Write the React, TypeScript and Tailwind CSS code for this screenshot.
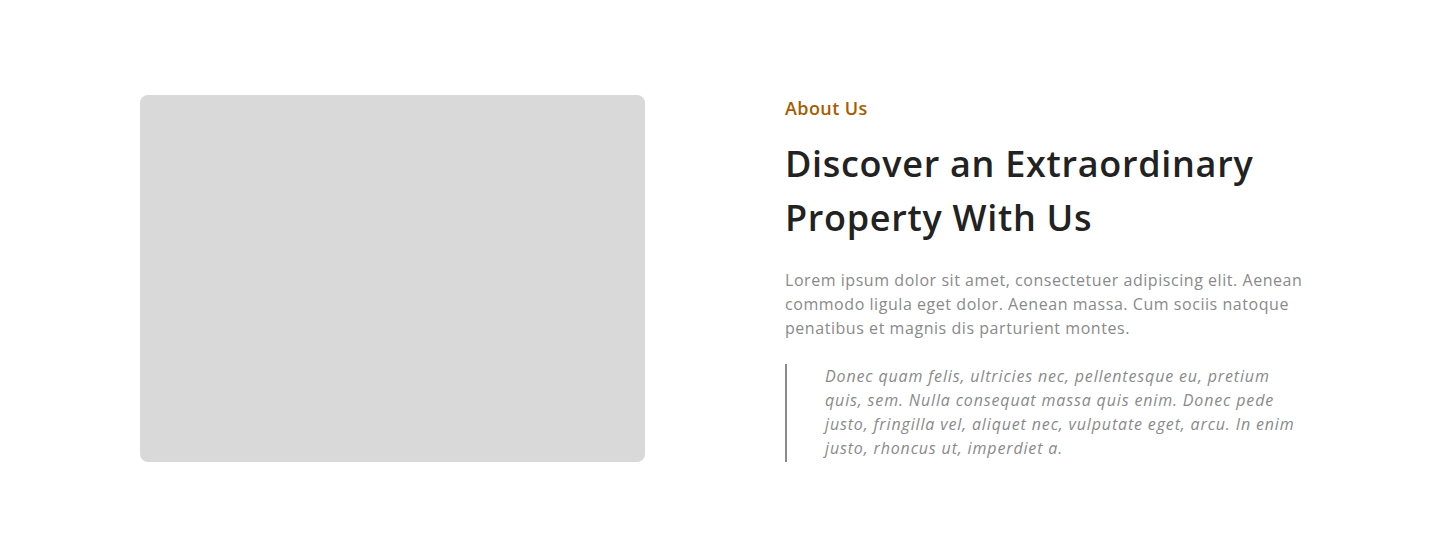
import React from "react";

export default function App() {
  const font = { fontFamily: '"Open Sans", "Liberation Sans", sans-serif' };
  return (
    <div className="w-[1440px] h-[545px] bg-white" style={font}>
      <div className="flex pt-[95px] pl-[140px]">
        <div className="w-[505px] h-[367px] rounded-lg bg-[#d9d9d9] shrink-0" />
        <div className="ml-[140px] w-[540px] flex flex-col">
          <div className="text-[18px] leading-[27px] font-semibold tracking-[0.4px] text-[#a85c00]">About Us</div>
          <h2 className="mt-[15px] text-[36px] leading-[54px] font-semibold tracking-[0.7px] text-[#222222] whitespace-nowrap">
            Discover an Extraordinary
            <br />
            Property With Us
          </h2>
          <p className="mt-[23px] text-[16px] leading-[24px] tracking-[0.55px] text-[#8a8a8a] whitespace-nowrap">
            Lorem ipsum dolor sit amet, consectetuer adipiscing elit. Aenean
            <br />
            commodo ligula eget dolor. Aenean massa. Cum sociis natoque
            <br />
            penatibus et magnis dis parturient montes.
          </p>
          <blockquote className="mt-[24px] border-l-2 border-[#8a8a8a] pl-[38px] pb-[2px] text-[16px] leading-[24px] italic tracking-[0.85px] text-[#8a8a8a] whitespace-nowrap">
            Donec quam felis, ultricies nec, pellentesque eu, pretium
            <br />
            quis, sem. Nulla consequat massa quis enim. Donec pede
            <br />
            justo, fringilla vel, aliquet nec, vulputate eget, arcu. In enim
            <br />
            justo, rhoncus ut, imperdiet a.
          </blockquote>
        </div>
      </div>
    </div>
  );
}
